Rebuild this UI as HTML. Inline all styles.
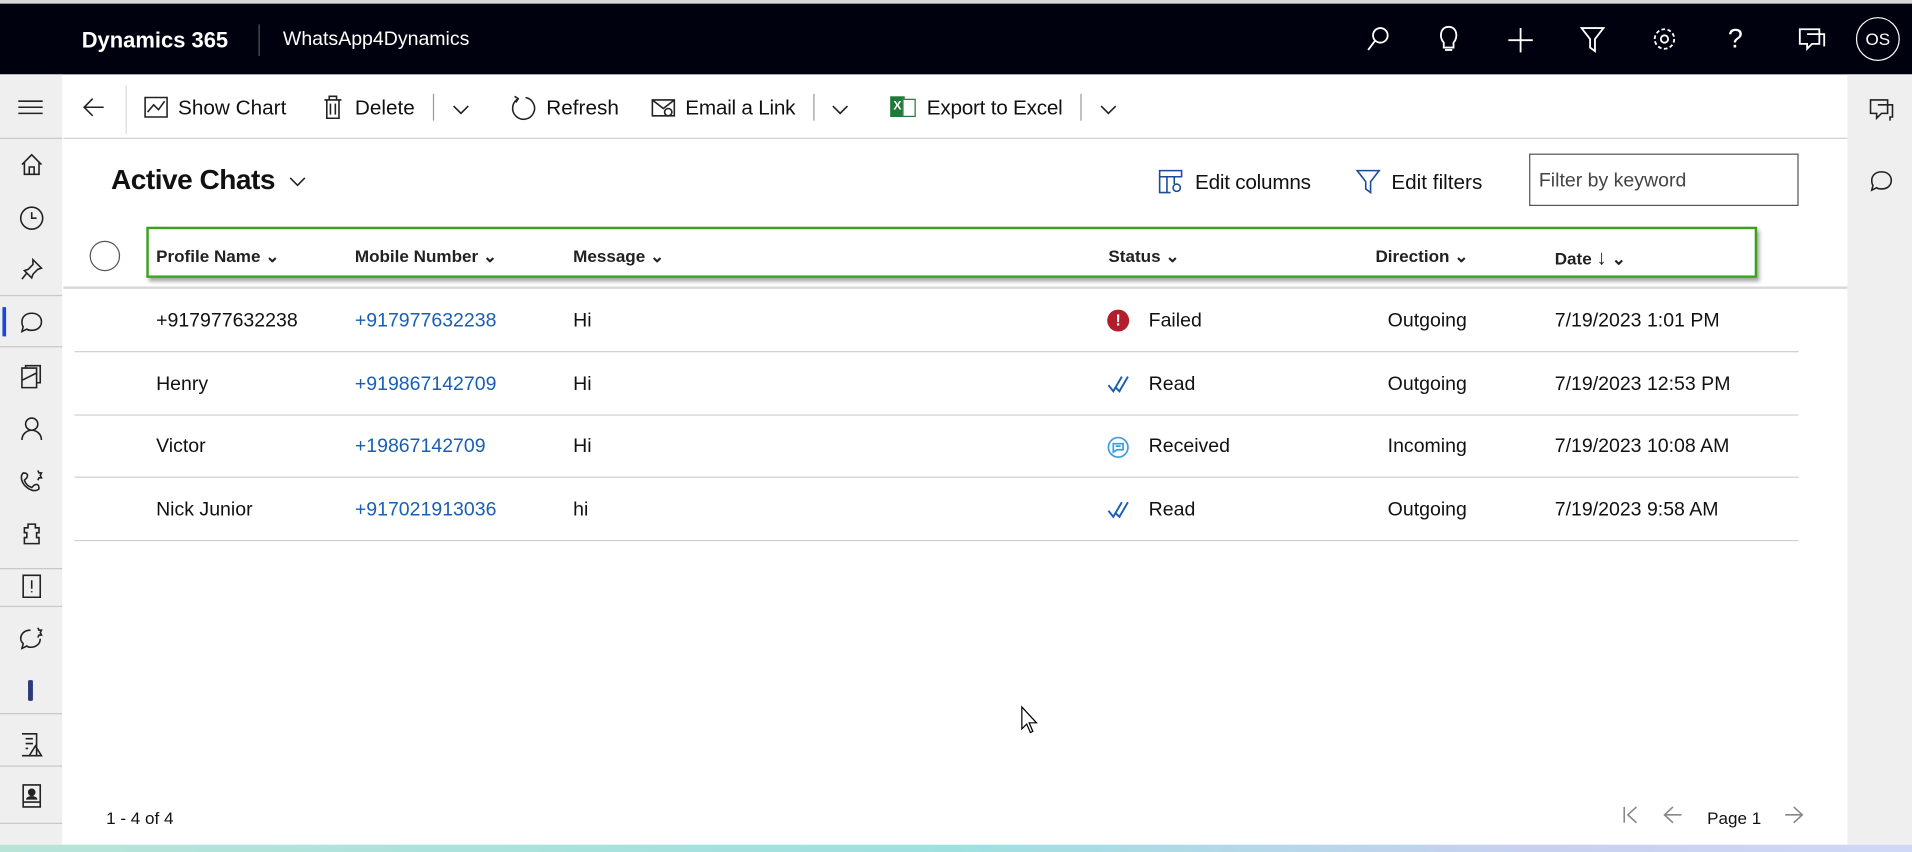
<!DOCTYPE html>
<html><head><meta charset="utf-8"><style>
html,body{margin:0;padding:0;width:1912px;height:852px;overflow:hidden;background:#fff}
#w{position:absolute;left:0;top:0;width:1568px;height:699px;transform:scale(1.21939,1.21889);transform-origin:0 0;font-family:"Liberation Sans",sans-serif;color:#111}
.a{position:absolute;white-space:nowrap}
svg{position:absolute;overflow:visible}
.nav svg{stroke:#222;fill:none;stroke-width:1.3}
.top svg{stroke:#fff;fill:none;stroke-width:1.5}
.h{font-size:14px;font-weight:bold;top:202px;color:#222}
.r{font-size:16px}
.l{color:#1a5fb4}
.sep{position:absolute;height:1px;background:#d0d0d0;left:61px;width:1414px}
.ns{position:absolute;left:0;width:51px;height:1px;background:#c8c8c8}
</style></head><body><div id="w">
<div style="position:absolute;left:0;top:0;width:1568px;height:3px;background:#d8d8d8"></div>
<div class="top" style="position:absolute;left:0;top:3px;width:1568px;height:58px;background:#00010f">
<div class="a" style="left:67px;top:20px;color:#fff;font-weight:bold;font-size:18px">Dynamics 365</div>
<div style="position:absolute;left:212px;top:17px;width:1px;height:26px;background:#555"></div>
<div class="a" style="left:232px;top:21px;color:#fff;font-size:16px">WhatsApp4Dynamics</div>
<svg style="left:1120px;top:18px" width="22" height="22"><circle cx="12" cy="8" r="6"/><path d="M8 12 2 20"/></svg>
<svg style="left:1178px;top:17px" width="22" height="24"><path d="M6 15C2 11 3 2 10 2s8 9 4 13v4H6z M7 21h6"/></svg>
<svg style="left:1236px;top:19px" width="22" height="22"><path d="M11 1v20M1 11h20"/></svg>
<svg style="left:1296px;top:19px" width="22" height="22"><path d="M1 1h18l-7 9v10l-4-3v-7z"/></svg>
<svg style="left:1355px;top:19px" width="22" height="22"><circle cx="10" cy="10" r="3"/><circle cx="10" cy="10" r="8" stroke-dasharray="3 2"/></svg>
<div class="a" style="left:1417px;top:16px;color:#fff;font-size:22px">?</div>
<svg style="left:1474px;top:19px" width="22" height="22"><path d="M2 2h16v12h-6l-4 4v-4H2z M8 6h14v10"/></svg>
<div style="position:absolute;left:1522px;top:11px;width:34px;height:34px;border:1px solid #fff;border-radius:50%;color:#fff;font-size:14px;text-align:center;line-height:34px">OS</div>
</div>
<div class="nav" style="position:absolute;left:0;top:61px;width:51px;height:632px;background:#efefef">
<svg style="left:15px;top:21px" width="20" height="12"><path d="M0 1h20M0 6h20M0 11h20"/></svg>
<div class="ns" style="top:52px"></div>
<svg style="left:17px;top:65px" width="18" height="18"><path d="M1 9 9 1l8 8M3 7v10h12V7M7 17v-6h4v6"/></svg>
<svg style="left:16px;top:108px" width="20" height="20"><circle cx="10" cy="10" r="9"/><path d="M10 5v5h4"/></svg>
<svg style="left:17px;top:151px" width="18" height="18"><path d="M10 1l7 7-3 1-4 4-1 3-6-6 3-1 4-4zM5 12l-4 5"/></svg>
<div class="ns" style="top:181px"></div>
<div style="position:absolute;left:2px;top:191px;width:3px;height:24px;background:#1746e0"></div>
<svg style="left:16px;top:194px" width="20" height="20"><path d="M10 2c5 0 8 3 8 7s-3 7-8 7c-2 0-3 0-4-1l-4 2 1-4C2 12 2 10 2 9c0-4 3-7 8-7z"/></svg>
<div class="ns" style="top:223px"></div>
<svg style="left:17px;top:238px" width="18" height="20"><path d="M1 3h12v16H1zM4 3V1h12v14h-3M1 13l12-6"/></svg>
<svg style="left:17px;top:281px" width="18" height="20"><circle cx="9" cy="6" r="5"/><path d="M1 19c0-5 4-8 8-8s8 3 8 8"/></svg>
<svg style="left:16px;top:324px" width="20" height="20"><path d="M3 3c4 0 4 2 3 4l-2 2c1 3 3 5 6 6l2-2c2-1 4-1 4 3-3 3-8 1-11-2S0 6 3 3zM15 1l1 2 2 0-1 2 1 2-2 0-1 2"/></svg>
<svg style="left:17px;top:368px" width="18" height="18"><path d="M6 1h6v3h3v4h-2v4h2v5H3v-5h2V8H3V4h3z"/></svg>
<div class="ns" style="top:405px"></div>
<svg style="left:18px;top:410px" width="16" height="20"><path d="M1 1h14v18H1zM8 5v7M8 14v1"/></svg>
<div class="ns" style="top:436px"></div>
<svg style="left:16px;top:453px" width="20" height="20"><path d="M9 3C4 3 1 6 1 10c0 2 1 3 2 4l-1 4 4-2c1 1 2 1 3 1 5 0 8-3 8-7M15 1l1 2 2 0-1 2 1 2-2 0-1 2"/></svg>
<div style="position:absolute;left:23px;top:497px;width:4px;height:17px;background:#2b3a78;border-radius:1px"></div>
<div class="ns" style="top:524px"></div>
<svg style="left:17px;top:540px" width="18" height="20"><path d="M1 1h12v18H1M4 5h6M4 9h6M4 13h2M12 11l5 8h-10z"/></svg>
<div class="ns" style="top:567px"></div>
<svg style="left:18px;top:582px" width="16" height="20"><path d="M1 1h14v18H1zM1 15h14"/><circle cx="8" cy="7" r="2.5" fill="#222"/><path d="M4 13c0-3 8-3 8 0" fill="#222"/></svg>
<div class="ns" style="top:614px"></div>
</div>
<div class="nav" style="position:absolute;left:1515px;top:61px;width:53px;height:632px;background:#efefef">
<svg style="left:18px;top:20px" width="20" height="20"><path d="M1 1h14v11h-5l-4 4v-4H1zM7 5h12v10h-2v3"/></svg>
<svg style="left:18px;top:78px" width="20" height="20"><path d="M10 2c5 0 8 3 8 7s-3 7-8 7c-2 0-3 0-4-1l-4 2 1-4C2 12 2 10 2 9c0-4 3-7 8-7z"/></svg>
</div>
<div style="position:absolute;left:52px;top:113px;width:1463px;height:1px;background:#d0d0d0"></div>
<div class="nav">
<svg style="left:68px;top:80px" width="18" height="16"><path d="M17 8H1M8 1 1 8l7 7"/></svg>
<div style="position:absolute;left:103px;top:70px;width:1px;height:40px;background:#ddd"></div>
<svg style="left:118px;top:79px" width="20" height="18"><path d="M1 1h18v16H1zM3 13l5-6 4 4 5-7"/></svg>
<div class="a" style="left:146px;top:79px;font-size:17px">Show Chart</div>
<svg style="left:265px;top:78px" width="16" height="20"><path d="M1 4h14M5 4V1h6v3M3 4v15h10V4M6 7v9M10 7v9"/></svg>
<div class="a" style="left:291px;top:79px;font-size:17px">Delete</div>
<div style="position:absolute;left:355px;top:77px;width:1px;height:22px;background:#999"></div>
<svg style="left:371px;top:86px" width="14" height="8"><path d="M1 1l6 6 6-6"/></svg>
<svg style="left:419px;top:78px" width="20" height="20"><path d="M6 3a9 9 0 1 0 6-1M3 1l3 2-2 3"/></svg>
<div class="a" style="left:448px;top:79px;font-size:17px">Refresh</div>
<svg style="left:534px;top:79px" width="20" height="18"><path d="M1 3h18v13H1zM1 3l9 7 9-7"/><circle cx="14" cy="13" r="3" fill="#fff"/></svg>
<div class="a" style="left:562px;top:79px;font-size:17px;letter-spacing:-0.2px">Email a Link</div>
<div style="position:absolute;left:667px;top:77px;width:1px;height:22px;background:#999"></div>
<svg style="left:682px;top:86px" width="14" height="8"><path d="M1 1l6 6 6-6"/></svg>
<div style="position:absolute;left:730px;top:79px;width:12px;height:17px;background:#1e7a3a;color:#fff;font-size:10px;font-weight:bold;text-align:center;line-height:17px">X</div>
<div style="position:absolute;left:740px;top:81px;width:9px;height:13px;border:1px solid #1e7a3a;background:#fff"></div>
<div class="a" style="left:760px;top:79px;font-size:17px;letter-spacing:-0.2px">Export to Excel</div>
<div style="position:absolute;left:886px;top:77px;width:1px;height:22px;background:#999"></div>
<svg style="left:902px;top:86px" width="14" height="8"><path d="M1 1l6 6 6-6"/></svg>
</div>
<div class="a" style="left:91px;top:134px;font-size:23px;font-weight:bold;letter-spacing:-0.4px">Active Chats</div>
<svg style="left:237px;top:145px" width="14" height="8" stroke="#222" fill="none" stroke-width="1.3"><path d="M1 1l6 6 6-6"/></svg>
<svg style="left:950px;top:139px" width="20" height="20" stroke="#1a4c9c" fill="none" stroke-width="1.3"><path d="M1 1h18v5H1zM1 6v13h9M7 6v13M13 6v6"/><circle cx="15" cy="15" r="3"/></svg>
<div class="a" style="left:980px;top:140px;font-size:17px;letter-spacing:-0.2px">Edit columns</div>
<svg style="left:1112px;top:139px" width="20" height="20" stroke="#1a4c9c" fill="none" stroke-width="1.3"><path d="M1 1h18l-7 9v9l-4-3v-6z"/></svg>
<div class="a" style="left:1141px;top:140px;font-size:17px">Edit filters</div>
<div style="position:absolute;left:1254px;top:126px;width:219px;height:41px;border:1px solid #555"></div>
<div class="a" style="left:1262px;top:140px;font-size:16px;color:#444">Filter by keyword</div>
<svg style="left:73px;top:197px" width="26" height="26" stroke="#555" fill="#fff" stroke-width="1"><circle cx="13" cy="13" r="12"/></svg>
<div style="position:absolute;left:120px;top:186px;width:1317px;height:38px;border:2px solid #3aa01e;box-shadow:2px 3px 3px rgba(0,0,0,.35)"></div>
<div class="a h" style="left:128px">Profile Name ⌄</div>
<div class="a h" style="left:291px">Mobile Number ⌄</div>
<div class="a h" style="left:470px">Message ⌄</div>
<div class="a h" style="left:909px">Status ⌄</div>
<div class="a h" style="left:1128px">Direction ⌄</div>
<div class="a h" style="left:1275px">Date <span style="font-weight:normal;font-size:17px">↓</span> ⌄</div>
<div style="position:absolute;left:52px;top:235px;width:1463px;height:2px;background:#d8d8d8"></div>
<div class="a r" style="left:128px;top:255px">+917977632238</div><div class="a r l" style="left:291px;top:255px">+917977632238</div><div class="a r" style="left:470px;top:255px">Hi</div>
<div style="position:absolute;left:908px;top:254px;width:18px;height:18px;border-radius:50%;background:#b21e2b;color:#fff;font-size:13px;font-weight:bold;text-align:center;line-height:18px">!</div>
<div class="a r" style="left:942px;top:255px">Failed</div><div class="a r" style="left:1138px;top:255px">Outgoing</div><div class="a r" style="left:1275px;top:255px">7/19/2023 1:01 PM</div>
<div class="sep" style="top:288px"></div>
<div class="a r" style="left:128px;top:307px">Henry</div><div class="a r l" style="left:291px;top:307px">+919867142709</div><div class="a r" style="left:470px;top:307px">Hi</div>
<svg style="left:908px;top:308px" width="18" height="14" stroke="#1a5fb4" fill="none" stroke-width="1.6"><path d="M1 8l4 5 7-12M7 10l3 3 7-12"/></svg>
<div class="a r" style="left:942px;top:307px">Read</div><div class="a r" style="left:1138px;top:307px">Outgoing</div><div class="a r" style="left:1275px;top:307px">7/19/2023 12:53 PM</div>
<div class="sep" style="top:340px"></div>
<div class="a r" style="left:128px;top:358px">Victor</div><div class="a r l" style="left:291px;top:358px">+19867142709</div><div class="a r" style="left:470px;top:358px">Hi</div>
<svg style="left:908px;top:358px" width="18" height="18" stroke="#3a9de0" fill="none" stroke-width="1.4"><circle cx="9" cy="9" r="8"/><path d="M5 6h8v5H8l-3 2zM7 8h4"/></svg>
<div class="a r" style="left:942px;top:358px">Received</div><div class="a r" style="left:1138px;top:358px">Incoming</div><div class="a r" style="left:1275px;top:358px">7/19/2023 10:08 AM</div>
<div class="sep" style="top:391px"></div>
<div class="a r" style="left:128px;top:410px">Nick Junior</div><div class="a r l" style="left:291px;top:410px">+917021913036</div><div class="a r" style="left:470px;top:410px">hi</div>
<svg style="left:908px;top:411px" width="18" height="14" stroke="#1a5fb4" fill="none" stroke-width="1.6"><path d="M1 8l4 5 7-12M7 10l3 3 7-12"/></svg>
<div class="a r" style="left:942px;top:410px">Read</div><div class="a r" style="left:1138px;top:410px">Outgoing</div><div class="a r" style="left:1275px;top:410px">7/19/2023 9:58 AM</div>
<div class="sep" style="top:443px"></div>
<svg style="left:837px;top:579px" width="16" height="24" stroke="#000" fill="#fff" stroke-width="1"><path d="M1 1v18l4-4 3 7 2-1-3-7h6z"/></svg>
<div class="a" style="left:87px;top:663px;font-size:14px">1 - 4 of 4</div>
<svg style="left:1331px;top:661px" width="150" height="16" stroke="#888" fill="none" stroke-width="1.3"><path d="M1 1v13M11 1 4 7.5 11 14M48 7.5H34M41 1l-7 6.5 7 6.5M133 7.5h14M140 1l7 6.5-7 6.5"/></svg>
<div class="a" style="left:1400px;top:663px;font-size:14px">Page 1</div>
<div style="position:absolute;left:0;top:693px;width:1568px;height:6px;background:linear-gradient(90deg,#b8e4d8,#9ee0e0 50%,#c8d0f0 80%,#d0d8f8)"></div>
</div></body></html>
